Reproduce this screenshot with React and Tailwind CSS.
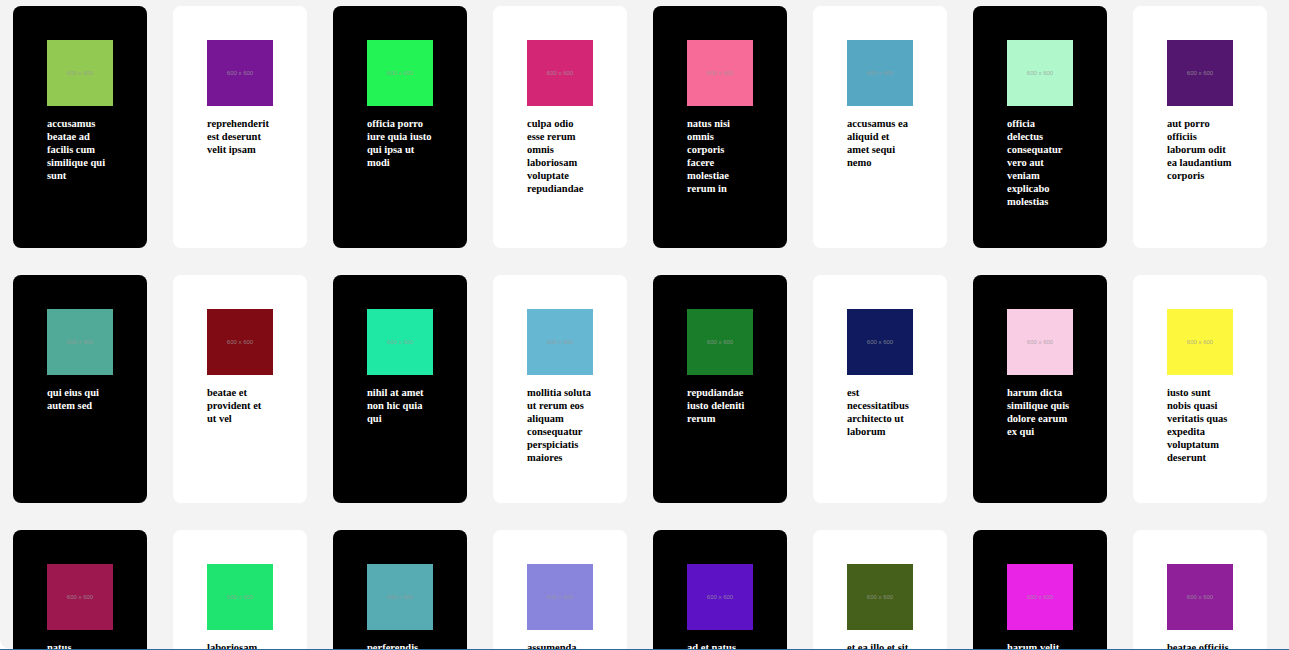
import React from 'react';

const photos = [
  { title: 'accusamus beatae ad facilis cum similique qui sunt', color: '#92c952' },
  { title: 'reprehenderit est deserunt velit ipsam', color: '#771796' },
  { title: 'officia porro iure quia iusto qui ipsa ut modi', color: '#24f355' },
  { title: 'culpa odio esse rerum omnis laboriosam voluptate repudiandae', color: '#d32776' },
  { title: 'natus nisi omnis corporis facere molestiae rerum in', color: '#f66b97' },
  { title: 'accusamus ea aliquid et amet sequi nemo', color: '#56a8c2' },
  { title: 'officia delectus consequatur vero aut veniam explicabo molestias', color: '#b0f7cc' },
  { title: 'aut porro officiis laborum odit ea laudantium corporis', color: '#54176f' },
  { title: 'qui eius qui autem sed', color: '#51aa97' },
  { title: 'beatae et provident et ut vel', color: '#810b14' },
  { title: 'nihil at amet non hic quia qui', color: '#1ee8a4' },
  { title: 'mollitia soluta ut rerum eos aliquam consequatur perspiciatis maiores', color: '#66b7d2' },
  { title: 'repudiandae iusto deleniti rerum', color: '#197d29' },
  { title: 'est necessitatibus architecto ut laborum', color: '#0f1b5e' },
  { title: 'harum dicta similique quis dolore earum ex qui', color: '#f9cee5' },
  { title: 'iusto sunt nobis quasi veritatis quas expedita voluptatum deserunt', color: '#fdf73e' },
  { title: 'natus doloribus necessitatibus ipsa', color: '#9c184f' },
  { title: 'laboriosam odit nam necessitatibus et illum dolores reiciendis', color: '#1fe46f' },
  { title: 'perferendis nesciunt eveniet et optio a', color: '#56acb2' },
  { title: 'assumenda voluptatem laboriosam enim consequatur veniam placeat reiciendis error', color: '#8985dc' },
  { title: 'ad et natus qui', color: '#5e12c6' },
  { title: 'et ea illo et sit voluptas animi blanditiis porro', color: '#45601a' },
  { title: 'harum velit vero totam', color: '#e924e6' },
  { title: 'beatae officiis ut aut', color: '#8f209a' },
];

/* ---------------- PHOTO CARD ---------------- */
const PhotoCard = ({ photo, dark }) => (
  <div
    className={`rounded-lg flex flex-col items-center pt-[34px] pb-[39.5px] ${
      dark ? 'bg-black text-white' : 'bg-white text-black'
    }`}
  >
    <div
      className="w-[66px] h-[66px] flex items-center justify-center"
      style={{ backgroundColor: photo.color }}
    >
      <span className="text-[6px] leading-none text-[#9a9a9a]/80 font-['Liberation_Sans',Arial,sans-serif]">
        600 x 600
      </span>
    </div>
    <p className="w-[66px] pr-[1px] mt-[11px] text-[10.5px] leading-[13px] font-bold font-['Liberation_Serif','Times_New_Roman',serif]">
      {photo.title}
    </p>
  </div>
);

const App = () => {
  return (
    <div className="h-[650px] overflow-hidden bg-white flex flex-col">
      <div className="flex-1 overflow-hidden bg-[#f3f3f3] rounded-bl-[10px]">
        <div className="grid grid-cols-[repeat(8,134px)] gap-x-[26px] gap-y-[27px] pl-[13px] pt-[6px] items-stretch">
          {photos.map((p, i) => (
            <PhotoCard key={i} photo={p} dark={i % 2 === 0} />
          ))}
        </div>
      </div>
      <div className="h-px bg-[#2c6aa0]" />
    </div>
  );
};

export default App;
